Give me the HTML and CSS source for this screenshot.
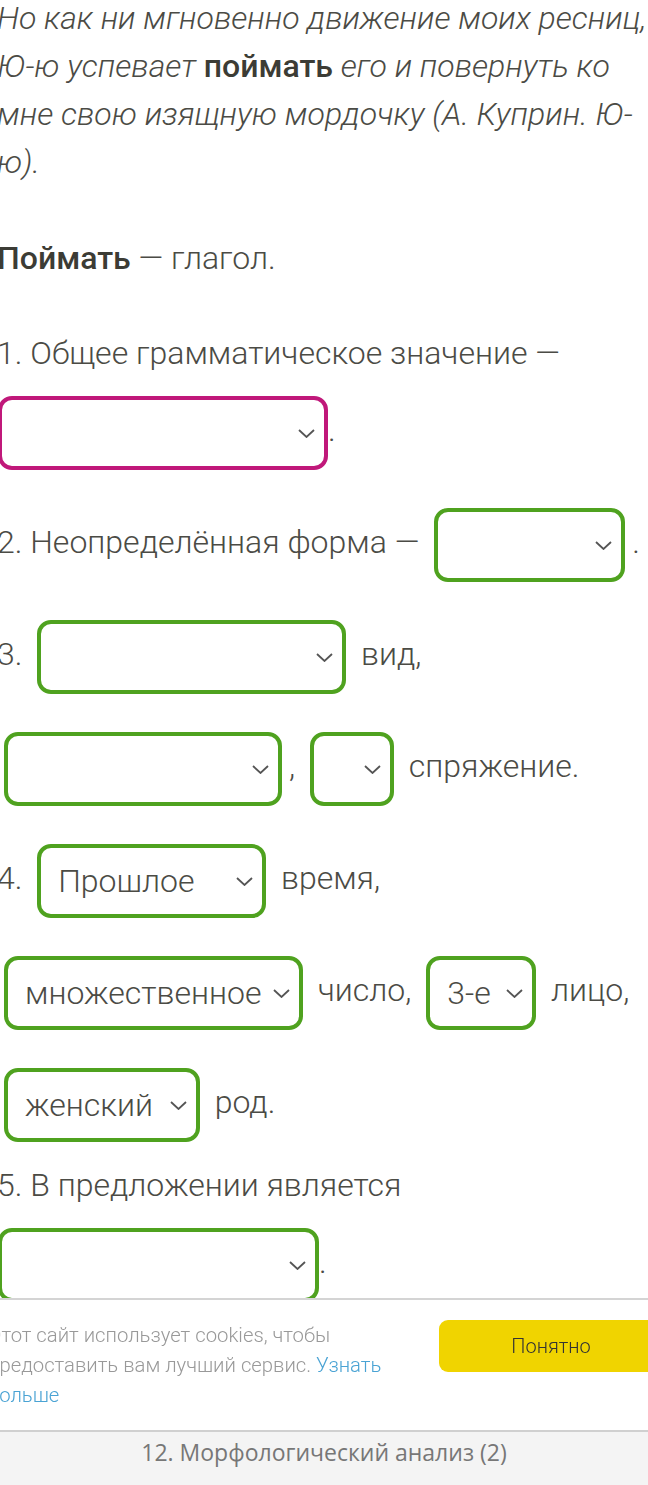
FILE: index.html
```html
<!DOCTYPE html>
<html lang="ru">

<head>
    <meta charset="UTF-8">
    <title>Морфологический анализ (2)</title>
    <link rel="stylesheet" href="styles.css">
</head>

<body>
    <div class="task">
        <p class="quote">Но как ни мгновенно движение моих ресниц, Ю-ю успевает <b>поймать</b> его и повернуть ко мне свою изящную мордочку (А. Куприн. Ю-ю).</p>

        <p class="pos"><b>Поймать</b> — глагол.</p>

        <div class="line">1. Общее грамматическое значение — <span class="pick pick_wide pick_bad w330"><span class="pick_val"></span><svg class="pick_arrow" viewBox="0 0 17 9"><path d="M1 1l7.5 7 7.5-7"/></svg></span>.</div>

        <div class="line">2. Неопределённая форма — <span class="pick w191"><span class="pick_val"></span><svg class="pick_arrow" viewBox="0 0 17 9"><path d="M1 1l7.5 7 7.5-7"/></svg></span>.</div>

        <div class="line">3. <span class="pick w309"><span class="pick_val"></span><svg class="pick_arrow" viewBox="0 0 17 9"><path d="M1 1l7.5 7 7.5-7"/></svg></span> вид,
            <span class="pick w278"><span class="pick_val"></span><svg class="pick_arrow" viewBox="0 0 17 9"><path d="M1 1l7.5 7 7.5-7"/></svg></span>, <span class="pick w84"><span class="pick_val"></span><svg class="pick_arrow" viewBox="0 0 17 9"><path d="M1 1l7.5 7 7.5-7"/></svg></span> спряжение.</div>

        <div class="line">4. <span class="pick w229"><span class="pick_val">Прошлое</span><svg class="pick_arrow" viewBox="0 0 17 9"><path d="M1 1l7.5 7 7.5-7"/></svg></span> время,
            <span class="pick w299"><span class="pick_val">множественное</span><svg class="pick_arrow" viewBox="0 0 17 9"><path d="M1 1l7.5 7 7.5-7"/></svg></span> число, <span class="pick w110"><span class="pick_val">3-е</span><svg class="pick_arrow" viewBox="0 0 17 9"><path d="M1 1l7.5 7 7.5-7"/></svg></span> лицо,
            <span class="pick w196"><span class="pick_val">женский</span><svg class="pick_arrow" viewBox="0 0 17 9"><path d="M1 1l7.5 7 7.5-7"/></svg></span> род.</div>

        <div class="line">5. В предложении является <span class="pick pick_wide w321"><span class="pick_val"></span><svg class="pick_arrow" viewBox="0 0 17 9"><path d="M1 1l7.5 7 7.5-7"/></svg></span>.</div>
    </div>

    <!-- плашка про cookies -->
    <div class="cookies">
        <div class="cookies_text">Этот сайт использует cookies, чтобы предоставить вам лучший сервис. <a href="#">Узнать больше</a></div>
        <div class="cookies_btn">Понятно</div>
    </div>

    <div class="nav_bar">12. Морфологический анализ (2)</div>
</body>

</html>
```

FILE: styles.css
```css
body {
    margin: 0;
    overflow: hidden;
    background: #fff;
}

.task {
    width: 655px;
    margin: -6px 0 0 -3px;
    font-family: Roboto, sans-serif;
    font-weight: 300;
    font-size: 32px;
    line-height: 48px;
    color: #4b4b45;
}

.task b {
    font-weight: 500;
    font-style: normal;
    color: #3c3c35;
}

.quote {
    margin: 0 0 48px;
    font-style: italic;
}

.pos {
    margin: 0 0 47px;
}

.line {
    margin: 0;
}

/* выпадающий список */
.pick {
    display: inline-flex;
    align-items: center;
    justify-content: space-between;
    box-sizing: border-box;
    height: 74px;
    margin: 19px 7px;
    padding: 0 9px 0 17px;
    border: 4px solid #4fa21f;
    border-radius: 14px;
    vertical-align: middle;
    background: #fff;
}

.pick_wide {
    margin-left: 1px;
    margin-right: 0;
}

.pick_bad {
    border-color: #c0187a;
}

.pick_val {
    white-space: nowrap;
}

.pick_arrow {
    width: 17px;
    height: 9px;
    flex: none;
    fill: none;
    stroke: #555;
    stroke-width: 1.8;
}

.w330 { width: 330px; }
.w321 { width: 321px; }
.w309 { width: 309px; }
.w299 { width: 299px; }
.w278 { width: 278px; }
.w229 { width: 229px; }
.w196 { width: 196px; }
.w191 { width: 191px; }
.w110 { width: 110px; }
.w84 { width: 84px; }

.cookies {
    position: fixed;
    left: 0;
    right: 0;
    bottom: 55px;
    height: 132px;
    box-sizing: border-box;
    display: flex;
    align-items: flex-start;
    padding: 20px 0 0;
    border-top: 2px solid #d4d4d4;
    background: #fff;
    font-family: Roboto, sans-serif;
    font-weight: 300;
}

.cookies_text {
    flex: none;
    width: 400px;
    margin-left: -12px;
    font-size: 20.3px;
    line-height: 30px;
    color: #999;
}

.cookies_text a {
    color: #4aa3d4;
    text-decoration: none;
}

.cookies_btn {
    flex: none;
    width: 224px;
    height: 52px;
    margin-left: 51px;
    border-radius: 9px;
    background: #f0d400;
    color: #333;
    font-size: 20px;
    line-height: 52px;
    text-align: center;
}

.nav_bar {
    position: fixed;
    left: 0;
    right: 0;
    bottom: 0;
    height: 53px;
    border-top: 2px solid #d0d0d0;
    background: #f4f4f4;
    font-family: "Open Sans", sans-serif;
    font-size: 23px;
    line-height: 40px;
    text-align: center;
    color: #777;
}
```
